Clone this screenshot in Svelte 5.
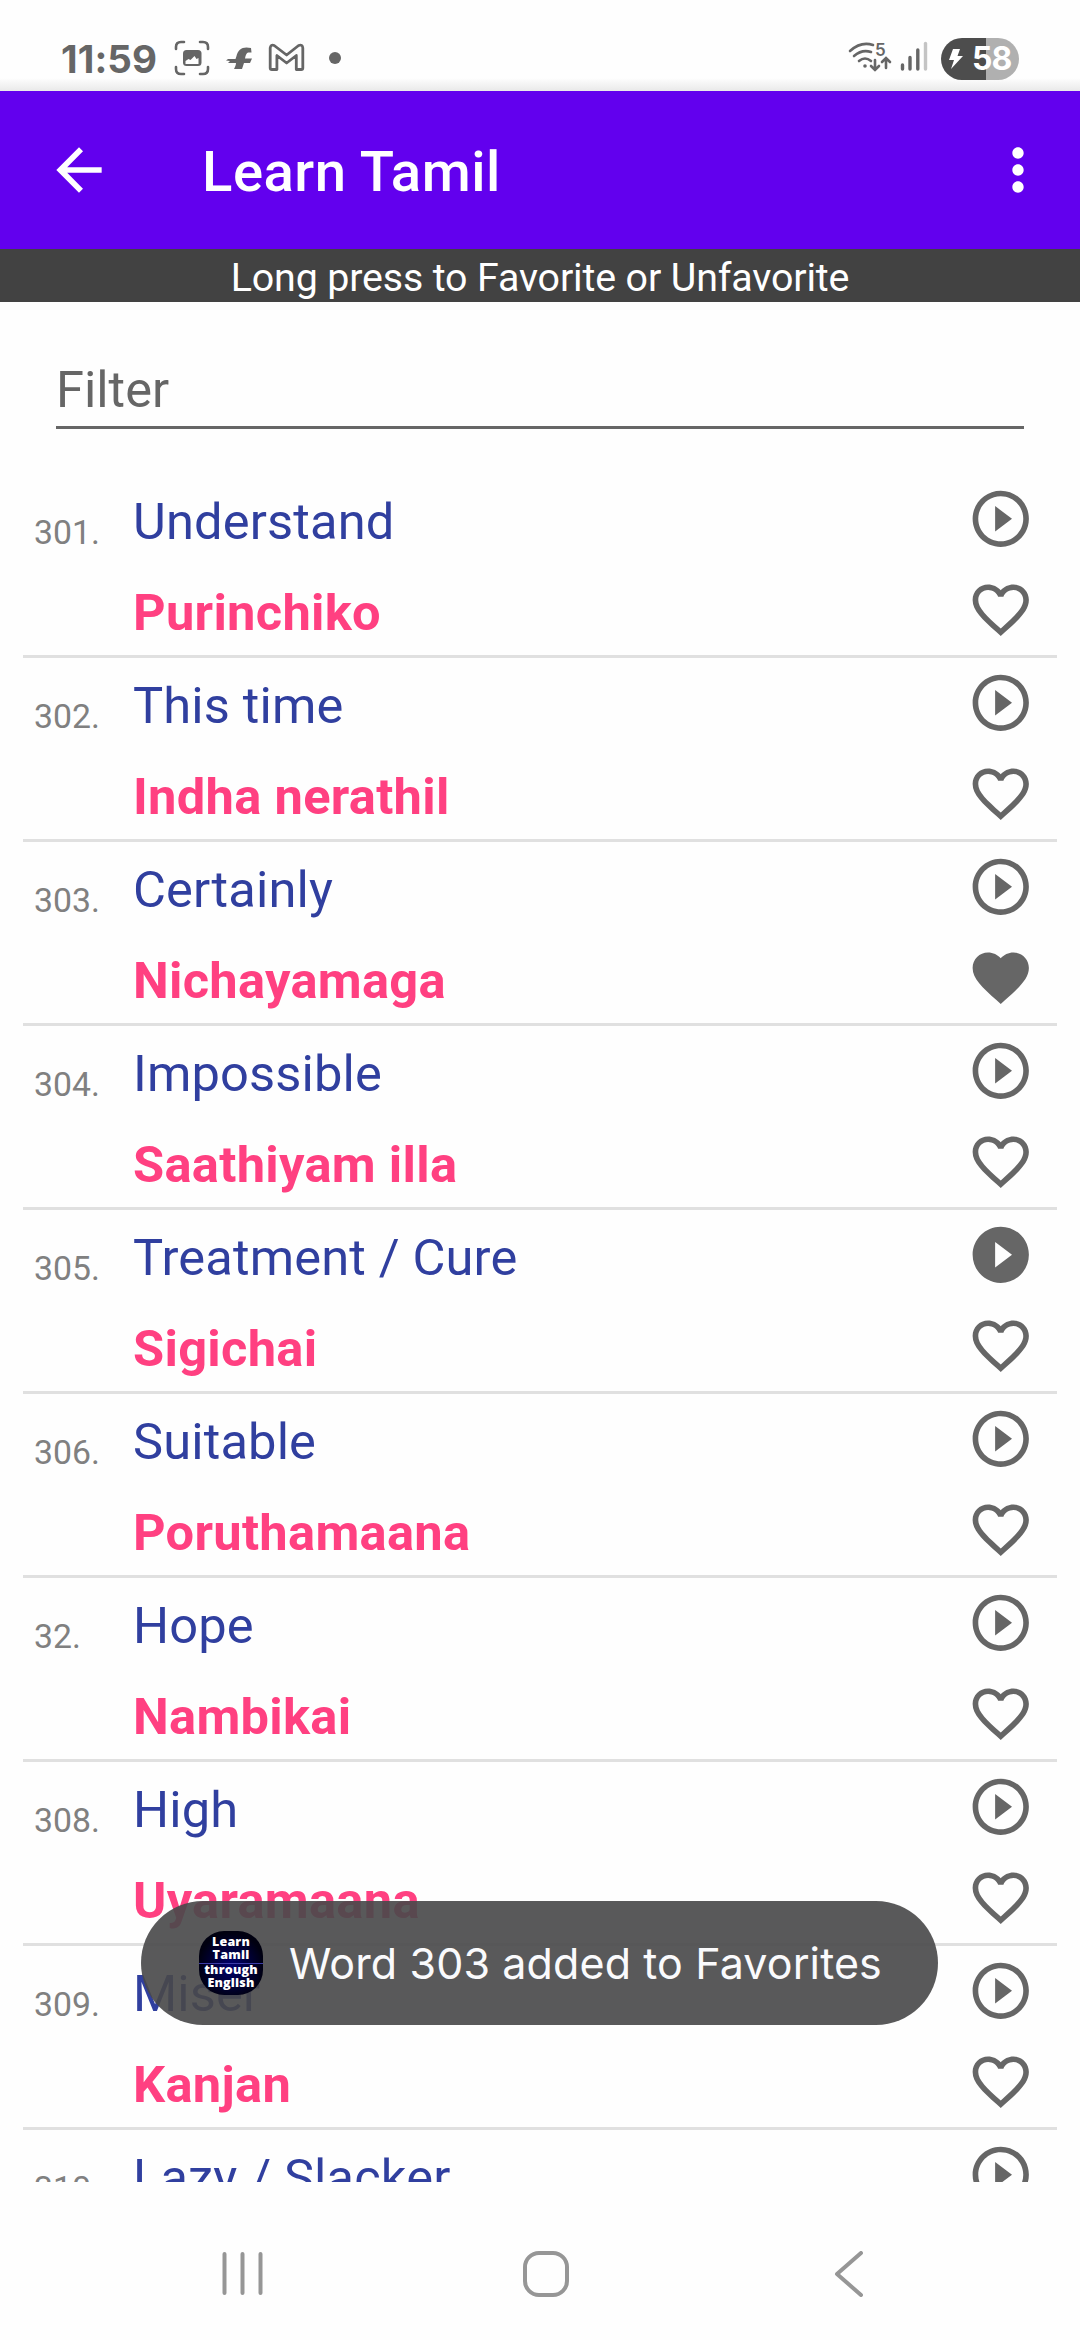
<script>
const words = [
  { num: '301.', english: 'Understand', tamil: 'Purinchiko' },
  { num: '302.', english: 'This time', tamil: 'Indha nerathil' },
  { num: '303.', english: 'Certainly', tamil: 'Nichayamaga', favorite: true },
  { num: '304.', english: 'Impossible', tamil: 'Saathiyam illa' },
  { num: '305.', english: 'Treatment / Cure', tamil: 'Sigichai', playing: true },
  { num: '306.', english: 'Suitable', tamil: 'Poruthamaana' },
  { num: '32.', english: 'Hope', tamil: 'Nambikai' },
  { num: '308.', english: 'High', tamil: 'Uyaramaana' },
  { num: '309.', english: 'Miser', tamil: 'Kanjan' },
  { num: '310.', english: 'Lazy / Slacker' },
];

const HEART = 'M12 21.35l-1.45-1.32C5.4 15.36 2 12.28 2 8.5 2 5.42 4.42 3 7.5 3c1.74 0 3.41.81 4.5 2.09C13.09 3.81 14.76 3 16.5 3 19.58 3 22 5.42 22 8.5c0 3.78-3.4 6.86-8.55 11.54L12 21.35z';
const HEART_OUTLINE = 'M16.5 3c-1.74 0-3.41.81-4.5 2.09C10.91 3.81 9.24 3 7.5 3 4.42 3 2 5.42 2 8.5c0 3.78 3.4 6.86 8.55 11.54L12 21.35l1.45-1.32C18.6 15.36 22 12.28 22 8.5 22 5.42 19.58 3 16.5 3zm-4.4 15.55l-.1.1-.1-.1C7.14 14.24 4 11.39 4 8.5 4 6.5 5.5 5 7.5 5c1.54 0 3.04.99 3.57 2.36h1.87C13.46 5.99 14.96 5 16.5 5c2 0 3.5 1.5 3.5 3.5 0 2.89-3.14 5.74-7.9 10.05z';
const PLAY = 'M12 2C6.48 2 2 6.48 2 12s4.48 10 10 10 10-4.48 10-10S17.52 2 12 2zm-2 14.5v-9l6 4.5-6 4.5z';
const PLAY_OUTLINE = 'M10 16.5l6-4.5-6-4.5v9zM12 2C6.48 2 2 6.48 2 12s4.48 10 10 10 10-4.48 10-10S17.52 2 12 2zm0 18c-4.41 0-8-3.59-8-8s3.59-8 8-8 8 3.59 8 8-3.59 8-8 8z';
</script>

<div class="screen">
  <div class="status">
    <span class="clock">11:59</span>
    <svg class="notifs" width="170" height="40" viewBox="0 0 170 40">
      <g fill="none" stroke="#666" stroke-width="2.6" stroke-linecap="round">
        <path d="M2 9V7q0-5 5-5h3M26 2h3q5 0 5 5v2M34 27v2q0 5-5 5h-3M10 34H7q-5 0-5-5v-2" />
      </g>
      <rect x="9" y="10" width="18.500" height="16" rx="3.500" fill="#666" />
      <path d="M11.500 24v-3l3-2 2 1 4-4 2 3 2-1v6z" fill="#fff" />
      <path d="M77 8c-8-2-13 1-14.500 8l-1 3H54l-2 1.500 4 .5-2 2h8c0 2-1 4-2 6h8l2-6h6l2-4.500h-7c1-5 2-6 4-6h2.500z" fill="#666" />
      <path d="M96.200 28V8q.500-4 4-2.500L112.600 15l12-9.500q4-1.500 4.200 2.500v20q0 1.500-1.500 1.500h-5V15.500l-9.700 7.500-9.700-7.500v14h-5q-1.700 0-1.700-1.500z" fill="none" stroke="#666" stroke-width="2.800" stroke-linejoin="round" />
      <circle cx="161" cy="18" r="6" fill="#666" />
    </svg>
    <div class="signals">
      <svg width="86" height="40" viewBox="0 0 86 40">
        <g fill="none" stroke="#666" stroke-width="2.600" stroke-linecap="round">
          <path d="M3 12Q14 2 26 6M7 17q8-7 17-4M12 22q6-5 12 0" />
          <path d="M28 21v10M24 27l4 4 4-4M39 29V20M35 23l4-4 4 4" />
        </g>
        <circle cx="18" cy="27" r="1.800" fill="#666" />
        <text x="28" y="16.500" class="band">5</text>
        <g stroke="#666" stroke-width="3.400" stroke-linecap="round">
          <path d="M55.500 26v4M63 18.500v11.500M70.800 11v19" />
          <path d="M78.500 4.500v25.500" stroke="#c4c4c4" />
        </g>
      </svg>
      <div class="battery">
        <svg width="16" height="22" viewBox="0 0 16 22"><path d="M5 1h7L9.500 8H15L3 21l3-9H1z" fill="#fff" /></svg>
        <span>58</span>
      </div>
    </div>
  </div>

  <header>
    <svg class="back" width="68" height="68" viewBox="0 0 24 24" fill="#fff"><path d="M20 11H7.830l5.590-5.590L12 4l-8 8 8 8 1.410-1.410L7.830 13H20v-2z" /></svg>
    <h1>Learn Tamil</h1>
    <svg class="more" width="68" height="68" viewBox="0 0 24 24" fill="#fff"><path d="M12 8c1.100 0 2-.900 2-2s-.900-2-2-2-2 .900-2 2 .900 2 2 2zm0 2c-1.100 0-2 .900-2 2s.900 2 2 2 2-.900 2-2-.900-2-2-2zm0 6c-1.100 0-2 .900-2 2s.900 2 2 2 2-.900 2-2-.900-2-2-2z" /></svg>
  </header>

  <div class="hint">Long press to Favorite or Unfavorite</div>
  <div class="filter">Filter</div>

  <main>
    {#each words as word}
      <div class="row">
        <span class="num">{word.num}</span>
        <div class="texts">
          <p class="english">{word.english}</p>
          {#if word.tamil}<p class="tamil">{word.tamil}</p>{/if}
        </div>
        <div class="actions">
          <svg width="67.500" height="67.500" viewBox="0 0 24 24"><path d={word.playing ? PLAY : PLAY_OUTLINE} /></svg>
          <svg width="67.500" height="67.500" viewBox="0 0 24 24"><path d={word.favorite ? HEART : HEART_OUTLINE} /></svg>
        </div>
      </div>
    {/each}
  </main>

  <nav>
    <svg width="42" height="46" viewBox="0 0 42 46"><path d="M2.500 3v39M20.500 3v39M38.500 3v39" /></svg>
    <svg class="home" width="46" height="46" viewBox="0 0 46 46"><rect x="2" y="2" width="42" height="42" rx="14" /></svg>
    <svg width="30" height="46" viewBox="0 0 30 46"><path d="M27 2L3 23l24 21" /></svg>
  </nav>

  <div class="toast">
    <div class="logo">
      <div>Learn<br />Tamil</div>
      <div class="lower">through<br />English</div>
    </div>
    <span>Word 303 added to Favorites</span>
  </div>
</div>

<style>
:global(body) {
  margin: 0;
  background: #fefefe;
}

.screen {
  position: relative;
  display: flex;
  flex-direction: column;
  width: 1080px;
  height: 2340px;
  overflow: hidden;
  background: #fefefe;
  font-family: Roboto, sans-serif;
}

svg {
  display: block;
  flex: none;
}

.status {
  box-sizing: border-box;
  display: flex;
  align-items: center;
  height: 91px;
  padding: 26px 61px 0;
  background: linear-gradient(#fefefe 78px, #e9e9e9 91px);
}

.clock {
  width: 113px;
  color: #666;
  font: 700 38.5px/64px Inter, sans-serif;
  letter-spacing: 0.1px;
}

.notifs {
  margin-top: 3px;
}

.signals {
  display: flex;
  align-items: center;
  gap: 8px;
  margin-left: auto;
}

.band {
  fill: #666;
  font: 600 17px Inter, sans-serif;
}

.battery {
  box-sizing: border-box;
  display: flex;
  align-items: center;
  gap: 8px;
  width: 78px;
  height: 42px;
  padding-left: 7px;
  border-radius: 21px;
  background: linear-gradient(90deg, #4d4d4d 45px, #b0b0b0 45px);
  color: #fff;
  font: 700 32px/42px Inter, sans-serif;
  letter-spacing: -1px;
}

header {
  display: flex;
  align-items: center;
  height: 158px;
  background: #6200ee;
  color: #fff;
}

.back {
  margin-left: 45px;
}

h1 {
  margin: 4px 0 0 89px;
  font-size: 56.25px;
  font-weight: 500;
  letter-spacing: 0.5px;
}

.more {
  margin-left: auto;
  margin-right: 28px;
}

.hint {
  height: 53px;
  background: #424242;
  color: #fff;
  font-size: 39.375px;
  line-height: 57px;
  letter-spacing: -0.14px;
  text-align: center;
}

.filter {
  box-sizing: border-box;
  height: 127px;
  margin: 0 56px;
  padding-top: 58px;
  border-bottom: 3px solid #666;
  color: #666;
  font-size: 50.625px;
  line-height: 60px;
}

main {
  flex: none;
  box-sizing: border-box;
  height: 1753px;
  padding: 45px 23px 0;
  overflow: hidden;
}

.row {
  box-sizing: border-box;
  display: flex;
  height: 184px;
  padding: 11px 23px 0 11px;
  border-bottom: 3px solid #e0e0e0;
}

.num {
  width: 99px;
  margin-top: 28px;
  color: #808080;
  font-size: 33.75px;
  line-height: 40px;
}

.texts {
  flex: 1;
}

p {
  margin: 0;
  font-size: 50.625px;
  line-height: 60px;
}

.english {
  margin-top: 7px;
  color: #303f9f;
  letter-spacing: 0.15px;
}

.tamil {
  margin-top: 31px;
  color: #ff4081;
  font-weight: 700;
  letter-spacing: 0.3px;
}

.actions {
  display: flex;
  flex-direction: column;
  gap: 23px;
  fill: #666;
}

nav {
  flex: 1;
  display: flex;
  align-items: center;
  padding: 43px 216px 17px 222px;
  justify-content: space-between;
  fill: none;
  stroke: #969696;
  stroke-width: 4;
  stroke-linecap: round;
  stroke-linejoin: round;
}

.home {
  margin-right: 6px;
}

.toast {
  position: absolute;
  top: 1901px;
  left: 141px;
  box-sizing: border-box;
  display: flex;
  align-items: center;
  gap: 26px;
  width: 797px;
  height: 124px;
  padding-left: 58px;
  border-radius: 62px;
  background: rgba(72, 72, 74, 0.91);
  color: #fafafc;
  font: 400 43px/60px Inter, sans-serif;
  letter-spacing: 0.12px;
  white-space: nowrap;
}

.logo {
  box-sizing: border-box;
  width: 64px;
  height: 64px;
  padding-top: 5px;
  overflow: hidden;
  border-radius: 25px;
  background: radial-gradient(circle at 50% 55%, #000070, #000010 70%);
  color: #fff;
  font: 800 12.5px/12.5px "Open Sans", sans-serif;
  letter-spacing: 0.2px;
  text-align: center;
}

.lower {
  margin-top: 2px;
  border-top: 1px solid #3c3ca8;
}
</style>
